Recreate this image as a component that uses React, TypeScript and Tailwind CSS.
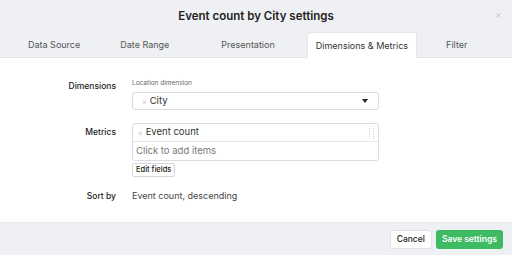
import { X } from 'lucide-react'

const tabs = [
  { label: 'Data Source', ml: 'ml-[20px]' },
  { label: 'Date Range', ml: 'ml-[24px]' },
  { label: 'Presentation', ml: 'ml-[36px]' },
  { label: 'Dimensions & Metrics', ml: 'ml-[24px]', active: true },
  { label: 'Filter', ml: 'ml-[21px]' },
]

function Caret() {
  return (
    <svg width="6" height="4" viewBox="0 0 6 4">
      <path d="M0 0h6L3 4z" fill="#222" />
    </svg>
  )
}

function Grip() {
  return (
    <svg width="5" height="14" viewBox="0 0 5 14">
      {[0, 1, 2, 3, 4, 5, 6].map((i) => (
        <g key={i}>
          <rect x="0" y={i * 2} width="1" height="1" fill="#d4d7dc" />
          <rect x="4" y={i * 2} width="1" height="1" fill="#d4d7dc" />
        </g>
      ))}
    </svg>
  )
}

export default function App() {
  return (
    <div className="flex h-[255px] w-[512px] flex-col overflow-hidden bg-white text-[#222] font-['Inter',sans-serif]">
      <div className="relative bg-[#eef0f3]">
        <h1 className="pt-[8px] text-center text-[11.5px] font-semibold leading-[16px] text-[#222]">
          Event count by City settings
        </h1>
        <X className="absolute right-[10px] top-[12px] h-[7px] w-[7px] text-[#b5b9bf]" strokeWidth={3} />
        <div className="mt-[9px] flex h-[25px] items-end border-b border-[#e3e5e8]">
          {tabs.map((t) => (
            <div
              key={t.label}
              className={
                'flex shrink-0 items-center whitespace-nowrap px-2 text-[9px] ' +
                t.ml +
                (t.active
                  ? ' -mb-px h-[26px] rounded-t-[3px] border border-b-0 border-[#e3e5e8] bg-white text-[#333]'
                  : ' h-[25px] text-[#555]')
              }
            >
              {t.label}
            </div>
          ))}
        </div>
      </div>

      <div className="flex-1 pt-[21px]">
        <div className="grid grid-cols-[116px_247px] gap-x-[16px]">
          <div className="pt-[1px] text-right text-[8.5px] font-medium leading-[12px]">Dimensions</div>
          <div>
            <div className="text-[6.5px] leading-[9px] text-[#666]">Location dimension</div>
            <div className="mt-[4px] flex h-[18px] items-center rounded-[3px] border border-[#d9dce0] pl-[9px] pr-[10px]">
              <span className="text-[7px] leading-none text-[#c4c4c4]">×</span>
              <span className="ml-[3px] text-[9.5px] text-[#333]">City</span>
              <span className="ml-auto flex">
                <Caret />
              </span>
            </div>
          </div>

          <div className="mt-[13px] pt-[3px] text-right text-[8.5px] font-medium leading-[12px]">Metrics</div>
          <div className="mt-[13px]">
            <div className="rounded-[3px] border border-[#d9dce0]">
              <div className="flex h-[18px] items-center border-b border-[#e3e5e8] pl-[5px] pr-[4px]">
                <span className="text-[7px] leading-none text-[#c4c4c4]">×</span>
                <span className="ml-[3px] text-[9.5px] text-[#333]">Event count</span>
                <span className="ml-auto flex">
                  <Grip />
                </span>
              </div>
              <div className="flex h-[18px] items-center pl-[3px] text-[9.5px] text-[#777]">Click to add items</div>
            </div>
            <button className="mt-[2px] flex h-[14px] items-center rounded-[2px] border border-[#d4d7dc] bg-white px-[3px] text-[7.5px] font-medium leading-none text-[#222]">
              Edit fields
            </button>
          </div>

          <div className="mt-[13px] text-right text-[8.5px] font-medium leading-[12px]">Sort by</div>
          <div className="mt-[13px] text-[9px] leading-[12px] text-[#444]">Event count, descending</div>
        </div>
      </div>

      <div className="flex h-[33px] items-center justify-end gap-[4px] border-t border-[#e6e8eb] bg-[#eef0f3] pr-[9px]">
        <button className="h-[19px] rounded-[3px] border border-[#e0e2e5] bg-white px-[6px] text-[8.5px] font-medium text-[#222]">
          Cancel
        </button>
        <button className="h-[19px] rounded-[3px] bg-[#3dba62] px-[6px] text-[8.5px] font-semibold text-white">
          Save settings
        </button>
      </div>
    </div>
  )
}
